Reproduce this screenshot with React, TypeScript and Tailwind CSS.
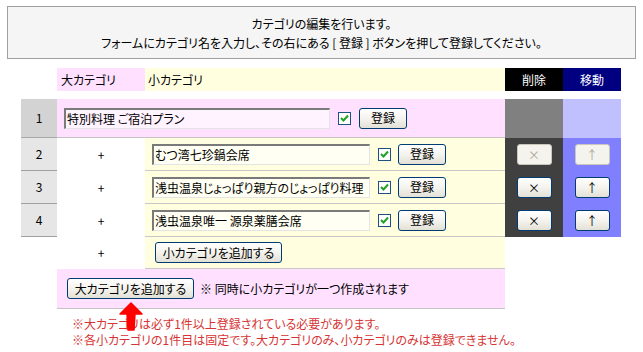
import React from 'react';

const XpButton = ({ label, className = '', disabled = false }: { label: string; className?: string; disabled?: boolean }) => (
  <div
    className={
      'flex items-center justify-center rounded-[3px] border text-[12px] ' +
      (disabled
        ? 'border-[#c9c7ba] bg-[#f4f3ee] text-[#aca899] '
        : 'border-[#003c74] bg-gradient-to-b from-white via-[#f4f3ee] to-[#e3e1d6] text-black ') +
      className
    }
  >
    {label}
  </div>
);

const Check = () => (
  <div className="flex h-[13px] w-[13px] items-center justify-center border border-[#1c5180] bg-white">
    <svg width="9" height="9" viewBox="0 0 9 9">
      <path d="M1 4 L3.5 6.5 L8 1.5" stroke="#21a121" strokeWidth="2" fill="none" />
    </svg>
  </div>
);

const TextBox = ({ value, className = '' }: { value: string; className?: string }) => (
  <div
    className={
      'flex items-center border-t-2 border-l-2 border-r border-b border-t-[#7a7a7a] border-l-[#7a7a7a] border-r-[#e4e4e4] border-b-[#e4e4e4] bg-white/60 pl-[1px] text-[12px] text-black overflow-hidden whitespace-nowrap ' +
      className
    }
  >
    {value}
  </div>
);

const subRows = [
  { n: '2', v: 'むつ湾七珍鍋会席', first: true },
  { n: '3', v: '浅虫温泉じょっぱり親方のじょっぱり料理', first: false },
  { n: '4', v: '浅虫温泉唯一 源泉薬膳会席', first: false },
];

export default function App() {
  return (
    <div className="relative h-[352px] w-[643px] overflow-hidden bg-white font-['Noto_Sans_CJK_JP',sans-serif] text-[12px] text-black [font-feature-settings:'palt']">
      <div className="mx-[7px] mt-[6px] flex h-[53px] flex-col items-center justify-center border border-[#a0a0a0] bg-[#f5f5f5] leading-[19px]">
        <div>カテゴリの編集を行います。</div>
        <div>フォームにカテゴリ名を入力し、その右にある [ 登録 ] ボタンを押して登録してください。</div>
      </div>

      <div className="ml-[21px] mt-[9px] w-[600px]">
        <div className="flex h-[23px] leading-[23px]">
          <div className="w-[36px]" />
          <div className="w-[88px] bg-[#ffe0ff] pl-[4px]">大カテゴリ</div>
          <div className="w-[360px] bg-[#ffffe0] pl-[3px]">小カテゴリ</div>
          <div className="w-[58px] bg-black text-center text-white">削除</div>
          <div className="w-[58px] bg-[#000080] text-center text-white">移動</div>
        </div>

        <div className="mt-[8px] flex h-[39px]">
          <div className="flex w-[36px] items-center justify-center border-b border-[#a8a8a8] bg-[#d3d3d3]">1</div>
          <div className="flex w-[448px] items-center border-b border-[#c4c4c4] bg-[#ffe0ff] pl-[7px]">
            <TextBox value="特別料理  ご宿泊プラン" className="h-[21px] w-[266px]" />
            <div className="ml-[8px]">
              <Check />
            </div>
            <XpButton label="登録" className="ml-[8px] h-[21px] w-[48px]" />
          </div>
          <div className="w-[58px] bg-[#808080]" />
          <div className="w-[58px] bg-[#c0c0ff]" />
        </div>

        {subRows.map((r) => (
          <div key={r.n} className="flex h-[33px]">
            <div className="flex w-[36px] items-center justify-center border-b border-[#a0a0a0] bg-[#e6e6e6]">{r.n}</div>
            <div className="flex w-[88px] items-center justify-center">+</div>
            <div className="flex w-[360px] items-center border-b border-[#c8c8c8] bg-[#ffffe0] pl-[7px]">
              <TextBox value={r.v} className="h-[21px] w-[218px]" />
              <div className="ml-[8px]">
                <Check />
              </div>
              <XpButton label="登録" className="ml-[7px] h-[21px] w-[48px]" />
            </div>
            <div className="flex w-[58px] items-center justify-center bg-[#404040]">
              <XpButton label="×" disabled={r.first} className="h-[21px] w-[35px]" />
            </div>
            <div className="flex w-[58px] items-center justify-center bg-[#8080ff]">
              <XpButton label="↑" disabled={r.first} className="h-[21px] w-[35px]" />
            </div>
          </div>
        ))}

        <div className="flex h-[32px]">
          <div className="w-[36px]" />
          <div className="flex w-[88px] items-center justify-center">+</div>
          <div className="flex w-[360px] items-center border-b border-[#c8c8c8] bg-[#ffffe0] pl-[10px]">
            <XpButton label="小カテゴリを追加する" className="h-[21px] w-[127px]" />
          </div>
        </div>

        <div className="flex h-[40px]">
          <div className="w-[36px]" />
          <div className="flex w-[448px] items-center border-b border-[#c4c4c4] bg-[#ffe0ff] pl-[10px]">
            <XpButton label="大カテゴリを追加する" className="h-[21px] w-[127px]" />
            <span className="ml-[6px]">※ 同時に小カテゴリが一つ作成されます</span>
          </div>
        </div>
      </div>

      <div className="ml-[72px] mt-[6px] leading-[17px] text-[#d63434]">
        <div>※大カテゴリは必ず1件以上登録されている必要があります。</div>
        <div className="-mt-[1px]">※各小カテゴリの1件目は固定です。大カテゴリのみ、小カテゴリのみは登録できません。</div>
      </div>

      <svg className="absolute left-[119px] top-[302px]" width="24" height="30" viewBox="0 0 24 30">
        <path d="M12 1 L23 12 L16 12 L15 28 L9 28 L8 12 L1 12 Z" fill="#ff0000" strokeLinejoin="round" stroke="#ff0000" strokeWidth="1.5" />
      </svg>
    </div>
  );
}
